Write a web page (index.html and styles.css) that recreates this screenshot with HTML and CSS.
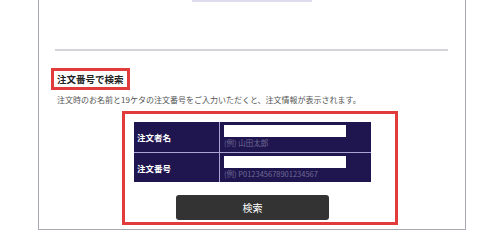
FILE: index.html
```html
<!DOCTYPE html>
<html lang="ja">
<head>
<meta charset="utf-8">
<title>注文番号で検索</title>
<link rel="stylesheet" href="styles.css">
</head>
<body>
<div class="panel">
  <div class="prev-bar"></div>
  <hr class="divider">
  <div class="heading-wrap"><h2 class="heading">注文番号で検索</h2></div>
  <p class="desc">注文時のお名前と19ケタの注文番号をご入力いただくと、注文情報が表示されます。</p>
  <div class="form-box">
    <div class="form-grid">
      <div class="label">注文者名</div>
      <div class="value">
        <div class="input"></div>
        <div class="hint">(例) 山田太郎</div>
      </div>
      <div class="label">注文番号</div>
      <div class="value">
        <div class="input"></div>
        <div class="hint">(例) P012345678901234567</div>
      </div>
    </div>
    <button class="search-btn">検索</button>
  </div>
</div>
</body>
</html>
```

FILE: styles.css
```css
html, body {
  margin: 0;
  padding: 0;
  background: #ffffff;
  font-family: "Noto Sans CJK JP", "Noto Sans", sans-serif;
}

.panel {
  margin-left: 38px;
  width: 426px;
  border: 1px solid #a8a8b2;
  border-top: none;
  padding-bottom: 4px;
  background: #fff;
}

.prev-bar {
  width: 120px;
  height: 2px;
  margin: 0 auto;
  background: #dcdcee;
}

.divider {
  margin: 47px 17px 0 16px;
  border: none;
  height: 2px;
  background: #d4d4dc;
}

.heading-wrap {
  margin-top: 13px;
  margin-left: 12px;
}

.heading {
  display: inline-block;
  margin: 0;
  border: 3px solid #e23b3b;
  padding: 0 3px;
  font-size: 9.5px;
  line-height: 16px;
  font-weight: bold;
  color: #222;
}

.desc {
  margin: 4px 0 0 18px;
  font-size: 8px;
  line-height: 12px;
  color: #555;
}

.form-box {
  margin-top: 5px;
  margin-left: 83px;
  width: 270px;
  border: 3px solid #e23b3b;
  padding: 8px 0 2px 0;
}

.form-grid {
  margin-left: 9px;
  width: 237px;
  display: grid;
  grid-template-columns: 85px 151px;
  grid-template-rows: 30px 29px;
  gap: 1px;
  background: #aaa4d4;
}

.label {
  background: #1f1650;
  color: #fff;
  font-weight: bold;
  font-size: 8.5px;
  display: flex;
  align-items: center;
  padding-left: 3px;
}

.value {
  background: #1f1650;
  padding: 3px 0 0 4px;
}

.input {
  width: 122px;
  height: 12px;
  background: #fff;
}

.hint {
  margin-top: 1px;
  font-size: 7.5px;
  line-height: 10px;
  color: #6f6a92;
}

.search-btn {
  display: block;
  margin: 13px 0 0 51px;
  width: 153px;
  height: 25px;
  border: none;
  border-radius: 3px;
  background: #333333;
  color: #fff;
  font-family: "Noto Sans CJK JP", sans-serif;
  font-size: 10px;
  padding: 0;
}
```
